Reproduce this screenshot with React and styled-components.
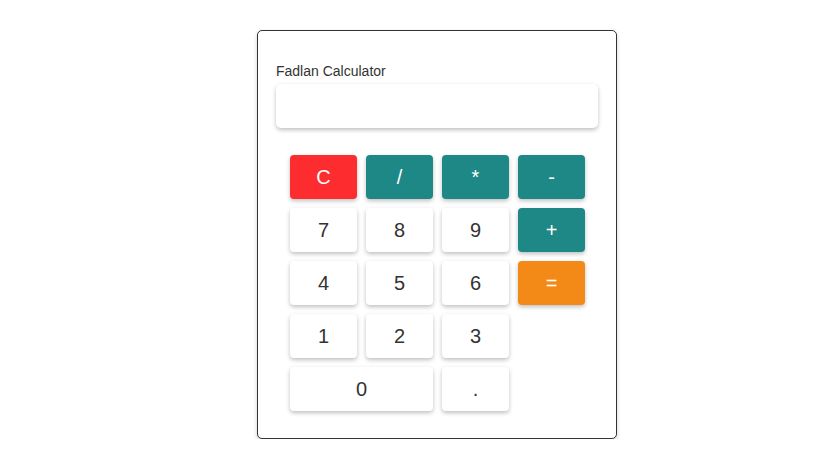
import styled, { createGlobalStyle } from 'styled-components';

const GlobalStyle = createGlobalStyle`
  body {
    margin: 0;
    background: #ffffff;
    font-family: "Liberation Sans", Arial, sans-serif;
  }
`;

const Page = styled.div`
  padding: 30px 0 0 257px;
`;

const Card = styled.div`
  width: 360px;
  box-sizing: border-box;
  border: 1px solid #333;
  border-radius: 5px;
  box-shadow: 0 2px 4px rgba(0, 0, 0, 0.2);
  padding: 32px 18px 27px;
  background: #fff;
`;

const Label = styled.label`
  display: block;
  font-size: 14px;
  line-height: 16px;
  color: #333;
  margin-bottom: 5px;
`;

const Display = styled.input`
  display: block;
  width: 100%;
  height: 44px;
  box-sizing: border-box;
  border: none;
  border-radius: 5px;
  box-shadow: 0 2px 4px rgba(0, 0, 0, 0.25);
  font-family: inherit;
  font-size: 20px;
  padding: 0 12px;
  outline: none;
`;

const Keypad = styled.div`
  display: grid;
  grid-template-columns: repeat(4, 67px);
  grid-auto-rows: 44px;
  column-gap: 9px;
  row-gap: 9px;
  padding: 0 14px;
  margin-top: 27px;
`;

const palette = {
  clear: { bg: '#fc2c2f', fg: '#fff' },
  op: { bg: '#1e8886', fg: '#fff' },
  equals: { bg: '#f38a17', fg: '#fff' },
  num: { bg: '#fff', fg: '#333' },
};

const Key = styled.button`
  grid-column: ${p => (p.$wide ? 'span 2' : 'auto')};
  border: none;
  border-radius: 4px;
  background: ${p => palette[p.$kind].bg};
  color: ${p => palette[p.$kind].fg};
  box-shadow: 0 2px 4px rgba(0, 0, 0, 0.25);
  font-family: "Liberation Sans", Arial, sans-serif;
  font-size: 20px;
  cursor: pointer;
  padding: 0;
`;

const keys = [
  ['C', 'clear'], ['/', 'op'], ['*', 'op'], ['-', 'op'],
  ['7', 'num'], ['8', 'num'], ['9', 'num'], ['+', 'op'],
  ['4', 'num'], ['5', 'num'], ['6', 'num'], ['=', 'equals'],
  ['1', 'num'], ['2', 'num'], ['3', 'num'], null,
  ['0', 'num', true], ['.', 'num'],
];

export default function App() {
  return (
    <>
      <GlobalStyle />
      <Page>
        <Card>
          <Label>Fadlan Calculator</Label>
          <Display type="text" readOnly />
          <Keypad>
            {keys.map((k, i) =>
              k ? (
                <Key key={i} $kind={k[1]} $wide={k[2]}>
                  {k[0]}
                </Key>
              ) : (
                <span key={i} />
              )
            )}
          </Keypad>
        </Card>
      </Page>
    </>
  );
}
